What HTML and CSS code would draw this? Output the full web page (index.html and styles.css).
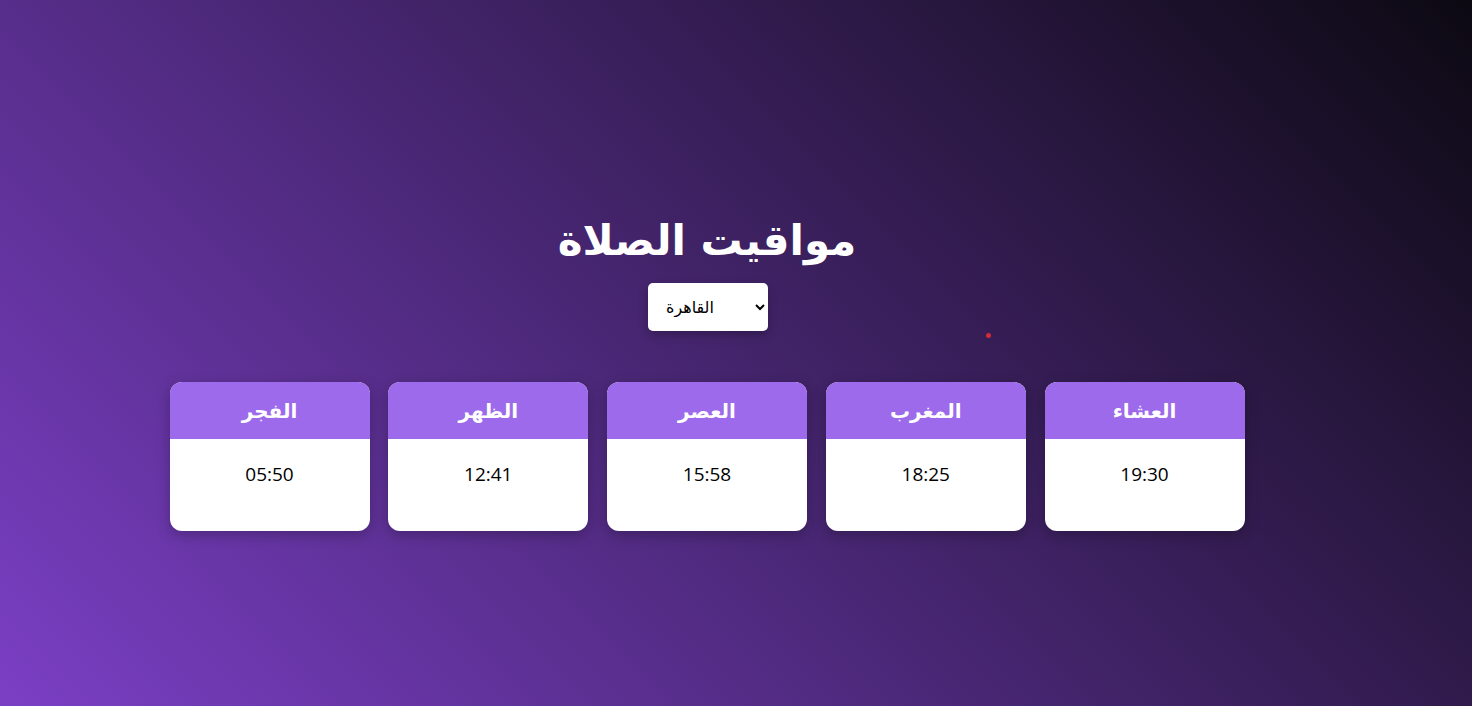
FILE: index.html
```html
<!DOCTYPE html>
<html lang="ar">
<head>
<meta charset="utf-8">
<title>مواقيت الصلاة</title>
<link rel="stylesheet" href="styles.css">
</head>
<body>
<main class="page">
  <h1 class="title">مواقيت الصلاة</h1>
  <select class="city">
    <option>القاهرة</option>
  </select>
  <section class="cards">
    <div class="card"><div class="card-head">الفجر</div><div class="card-body">05:50</div></div>
    <div class="card"><div class="card-head">الظهر</div><div class="card-body">12:41</div></div>
    <div class="card"><div class="card-head">العصر</div><div class="card-body">15:58</div></div>
    <div class="card"><div class="card-head">المغرب</div><div class="card-body">18:25</div></div>
    <div class="card"><div class="card-head">العشاء</div><div class="card-body">19:30</div></div>
  </section>
  <span class="dot"></span>
</main>
</body>
</html>
```

FILE: styles.css
```css
html, body {
  margin: 0;
  padding: 0;
  height: 100%;
}
body {
  background: linear-gradient(45deg, #7b3fc5 0%, #0c0912 100%);
  font-family: "Open Sans", "DejaVu Sans", sans-serif;
  overflow: hidden;
}
.page {
  position: relative;
  height: 706px;
  box-sizing: border-box;
  padding: 208px 58px 0 0;
  display: flex;
  flex-direction: column;
  align-items: center;
}
.title {
  margin: 0;
  color: #ffffff;
  font-family: "DejaVu Sans", sans-serif;
  font-weight: bold;
  font-size: 42px;
  line-height: 66px;
  direction: rtl;
}
.city {
  margin-top: 9px;
  margin-left: 2px;
  width: 120px;
  height: 48px;
  border: none;
  border-radius: 5px;
  background: #ffffff;
  padding: 0 10px 0 14px;
  font-family: "Liberation Serif", "DejaVu Sans", serif;
  font-size: 16px;
  color: #000;
  box-shadow: 0 4px 10px rgba(0, 0, 0, 0.25);
}
.cards {
  margin-top: 51px;
  display: flex;
  flex-direction: row;
  gap: 18.75px;
}
.card {
  width: 200px;
  height: 149px;
  background: #ffffff;
  border-radius: 12px;
  overflow: hidden;
  box-shadow: 0 4px 14px rgba(0, 0, 0, 0.25);
  display: flex;
  flex-direction: column;
}
.card-head {
  height: 57px;
  background: #9d6aeb;
  color: #ffffff;
  font-family: "DejaVu Sans", sans-serif;
  font-weight: bold;
  font-size: 20px;
  display: flex;
  align-items: center;
  justify-content: center;
  direction: rtl;
}
.card-body {
  padding-top: 22px;
  text-align: center;
  font-size: 19px;
  line-height: 27px;
  color: #000;
}
.dot {
  position: absolute;
  left: 986px;
  top: 333px;
  width: 5px;
  height: 5px;
  border-radius: 50%;
  background: #d42a3a;
}
```
